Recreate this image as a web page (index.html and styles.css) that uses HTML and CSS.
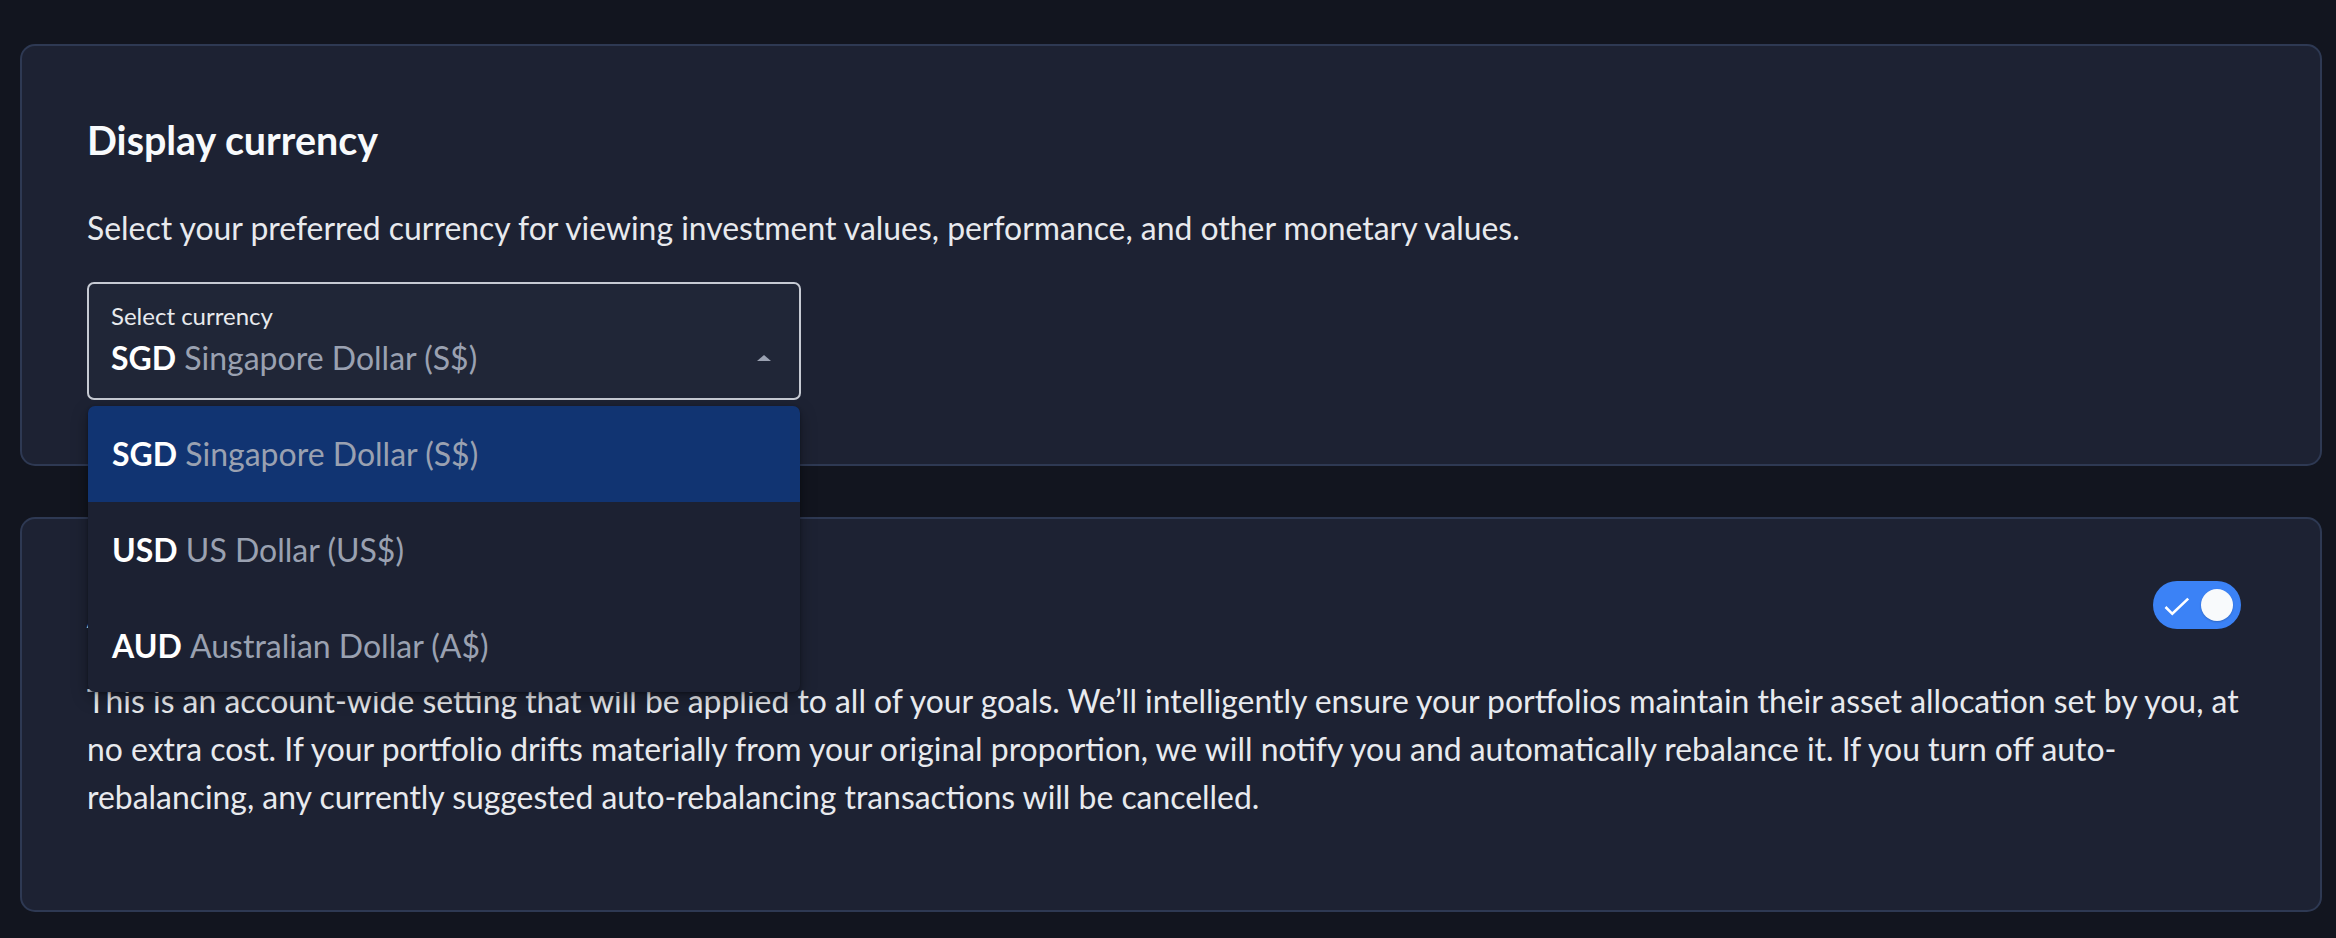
FILE: index.html
```html
<!DOCTYPE html>
<html lang="en">
<head>
<meta charset="utf-8">
<title>Settings</title>
<link rel="stylesheet" href="styles.css">
</head>
<body>
<main class="page">
  <section class="card">
    <h2 class="card-title">Display currency</h2>
    <p class="card-text">Select your preferred currency for viewing investment values, performance, and other monetary values.</p>
    <div class="select-wrap">
      <div class="select">
        <div class="select-body">
          <span class="select-label">Select currency</span>
          <span class="select-value"><b class="code">SGD</b> <span class="name">Singapore Dollar (S$)</span></span>
        </div>
        <span class="select-arrow"></span>
      </div>
      <ul class="menu">
        <li class="menu-item selected"><b class="code">SGD</b>&nbsp;<span class="name">Singapore Dollar (S$)</span></li>
        <li class="menu-item"><b class="code">USD</b>&nbsp;<span class="name">US Dollar (US$)</span></li>
        <li class="menu-item"><b class="code">AUD</b>&nbsp;<span class="name">Australian Dollar (A$)</span></li>
      </ul>
    </div>
  </section>
  <section class="card card-tall">
    <div class="card-head">
      <h2 class="card-title">Auto-rebalancing</h2>
      <span class="switch">
        <svg class="switch-check" width="26" height="19" viewBox="0 0 26 19"><path d="M1.5 10 L8.3 16.8 L24.2 1.6" fill="none" stroke="#ffffff" stroke-width="2.6" stroke-linecap="butt" stroke-linejoin="miter"/></svg>
        <span class="switch-knob"></span>
      </span>
    </div>
    <p class="card-text">This is an account-wide setting that will be applied to all of your goals. We’ll intelligently ensure your portfolios maintain their asset allocation set by you, at no extra cost. If your portfolio drifts materially from your original proportion, we will notify you and automatically rebalance it. If you turn off auto-rebalancing, any currently suggested auto-rebalancing transactions will be cancelled.</p>
  </section>
</main>
</body>
</html>
```
FILE: styles.css
```css
* { box-sizing: border-box; }
html, body {
  margin: 0;
  padding: 0;
  background: #12151f;
  font-family: Lato, "Open Sans", sans-serif;
  color: #eef0f4;
}
.page {
  display: flex;
  flex-direction: column;
  gap: 51px;
  padding: 44px 14px 0 20px;
}
.card {
  background: #1d2233;
  border: 2px solid #2e3953;
  border-radius: 15px;
  padding: 72px 65px 64px 65px;
}
.card-title {
  margin: 0;
  font-size: 39.4px;
  line-height: 43px;
  font-weight: 700;
  color: #f8fafc;
}
.card-text {
  margin: 43px 0 0 0;
  font-size: 31.9px;
  line-height: 48px;
  color: #e8eaee;
}
.card-tall .card-text { margin-bottom: 25px; }
.card-head {
  display: flex;
  justify-content: space-between;
  align-items: flex-start;
}
.select-wrap {
  position: relative;
  width: 714px;
  margin-top: 30px;
}
.select {
  height: 118px;
  border: 2px solid #c6cad3;
  border-radius: 7px;
  background: #202637;
  display: flex;
  align-items: flex-start;
  justify-content: space-between;
  padding: 18px 22px 0 22px;
}
.select-body {
  display: flex;
  flex-direction: column;
  gap: 9px;
}
.select-label {
  font-size: 24px;
  line-height: 27.6px;
  color: #e8eaee;
}
.select-value, .menu-item {
  font-size: 32px;
  line-height: 38.4px;
}
.code { font-weight: 700; color: #ffffff; }
.name { color: #9aa1b1; }
.select-arrow {
  width: 0;
  height: 0;
  margin: 53px 6px 0 0;
  border-left: 7px solid transparent;
  border-right: 7px solid transparent;
  border-bottom: 6px solid #9aa1b1;
}
.menu {
  position: absolute;
  left: 1px;
  top: 124px;
  width: 712px;
  height: 286px;
  margin: 0;
  padding: 0;
  list-style: none;
  background: #1c2132;
  border-radius: 7px;
  overflow: hidden;
  box-shadow: 0 6px 16px rgba(0, 0, 0, 0.35), 0 1px 3px rgba(0, 0, 0, 0.3);
  z-index: 2;
}
.menu-item {
  height: 96px;
  flex-shrink: 0;
  display: flex;
  align-items: center;
  padding-left: 24px;
}
.menu-item.selected { background: #113472; }
.switch {
  position: relative;
  width: 88px;
  height: 48px;
  margin: -10px 14px 0 0;
  border-radius: 24px;
  background: #3b82f6;
  display: flex;
  align-items: center;
  justify-content: space-between;
  padding: 0 8px 0 11px;
}
.switch-check { display: block; margin-top: 2px; }
.switch-knob {
  width: 32px;
  height: 32px;
  border-radius: 50%;
  background: #f8fafc;
  box-shadow: 0 1px 2px rgba(0, 0, 0, 0.2);
}
```
